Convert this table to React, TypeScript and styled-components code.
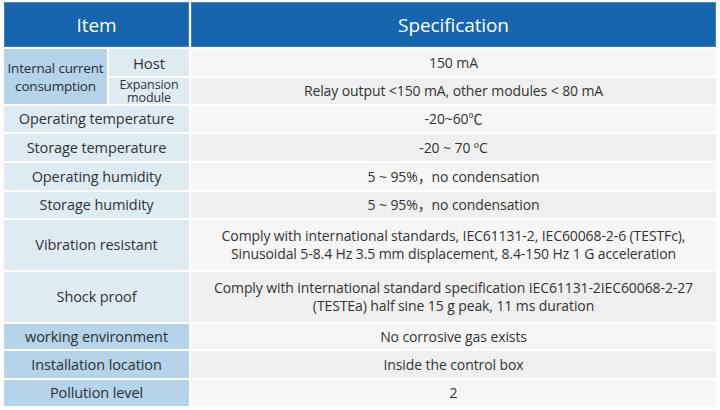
import { createGlobalStyle, styled } from 'styled-components';

const GlobalStyle = createGlobalStyle`
  html, body {
    margin: 0;
    padding: 0;
    background: #ffffff;
  }
  body {
    font-family: "Open Sans", "Noto Sans CJK SC", sans-serif;
  }
`;

type Tone = 'head' | 'key' | 'keyDark' | 'val' | 'valAlt';

const tones: Record<Tone, { bg: string; fg: string }> = {
  head: { bg: '#1766ad', fg: '#ffffff' },
  key: { bg: '#dfebf3', fg: '#2f3336' },
  keyDark: { bg: '#b5d3e9', fg: '#2b3034' },
  val: { bg: '#f6f6f6', fg: '#333333' },
  valAlt: { bg: '#efefef', fg: '#333333' },
};

const Page = styled.div`
  width: 720px;
  height: 410px;
  padding: 2px 4px;
  box-sizing: border-box;
`;

const Table = styled.div`
  display: grid;
  grid-template-columns: 103px 80px 525px;
  grid-template-rows: 45px 27px 26px 26px 27px 27px 26px 50px 50px 25px 27px 26px;
  gap: 2px;
`;

const Cell = styled.div<{ $tone: Tone; $cols?: number; $rows?: number }>`
  display: flex;
  align-items: center;
  justify-content: center;
  text-align: center;
  background: ${({ $tone }) => tones[$tone].bg};
  color: ${({ $tone }) => tones[$tone].fg};
  grid-column: span ${({ $cols }) => $cols ?? 1};
  grid-row: span ${({ $rows }) => $rows ?? 1};
  font-size: 14px;
  line-height: 18px;
  letter-spacing: -0.1px;
  padding: 0 2px;
`;

const KeyCell = styled(Cell)`
  font-size: 14.5px;
`;

const GroupCell = styled(Cell)`
  font-size: 13.5px;
  line-height: 18px;
  letter-spacing: -0.2px;
  white-space: nowrap;
  padding: 0;
`;

const SubCell = styled(Cell)<{ $small?: boolean }>`
  font-size: ${({ $small }) => ($small ? '12.5px' : '15px')};
  line-height: ${({ $small }) => ($small ? '13px' : '18px')};
`;

const HeadCell = styled(Cell)`
  font-size: 19px;
  box-shadow: inset 0 0 0 1px #3d82c2;
`;

type Row = { item: string; spec: string; dark?: boolean };

const rows: Row[] = [
  { item: 'Operating temperature', spec: '-20~60℃' },
  { item: 'Storage temperature', spec: '-20 ~ 70 ºC' },
  { item: 'Operating humidity', spec: '5 ~ 95%，no condensation' },
  { item: 'Storage humidity', spec: '5 ~ 95%，no condensation' },
  {
    item: 'Vibration resistant',
    spec: 'Comply with international standards, IEC61131-2, IEC60068-2-6 (TESTFc),\nSinusoidal 5-8.4 Hz 3.5 mm displacement, 8.4-150 Hz 1 G acceleration',
  },
  {
    item: 'Shock proof',
    spec: 'Comply with international standard specification IEC61131-2IEC60068-2-27\n(TESTEa) half sine 15 g peak, 11 ms duration',
  },
  { item: 'working environment', spec: 'No corrosive gas exists', dark: true },
  { item: 'Installation location', spec: 'Inside the control box', dark: true },
  { item: 'Pollution level', spec: '2', dark: true },
];

function lines(text: string) {
  return text.split('\n').map((line, i) => (
    <span key={i}>
      {i > 0 && <br />}
      {line}
    </span>
  ));
}

export default function App() {
  return (
    <Page>
      <GlobalStyle />
      <Table>
        <HeadCell $tone="head" $cols={2}>Item</HeadCell>
        <HeadCell $tone="head">Specification</HeadCell>

        <GroupCell $tone="keyDark" $rows={2}>
          <div>Internal current<br />consumption</div>
        </GroupCell>
        <SubCell $tone="key">Host</SubCell>
        <Cell $tone="val">150 mA</Cell>
        <SubCell $tone="key" $small>
          <div>Expansion<br />module</div>
        </SubCell>
        <Cell $tone="valAlt">Relay output &lt;150 mA, other modules &lt; 80 mA</Cell>

        {rows.map((row, i) => [
          <KeyCell key={`k${i}`} $tone={row.dark ? 'keyDark' : 'key'} $cols={2}>
            {row.item}
          </KeyCell>,
          <Cell key={`v${i}`} $tone={i % 2 === 0 ? 'val' : 'valAlt'}>
            <div>{lines(row.spec)}</div>
          </Cell>,
        ])}
      </Table>
    </Page>
  );
}
